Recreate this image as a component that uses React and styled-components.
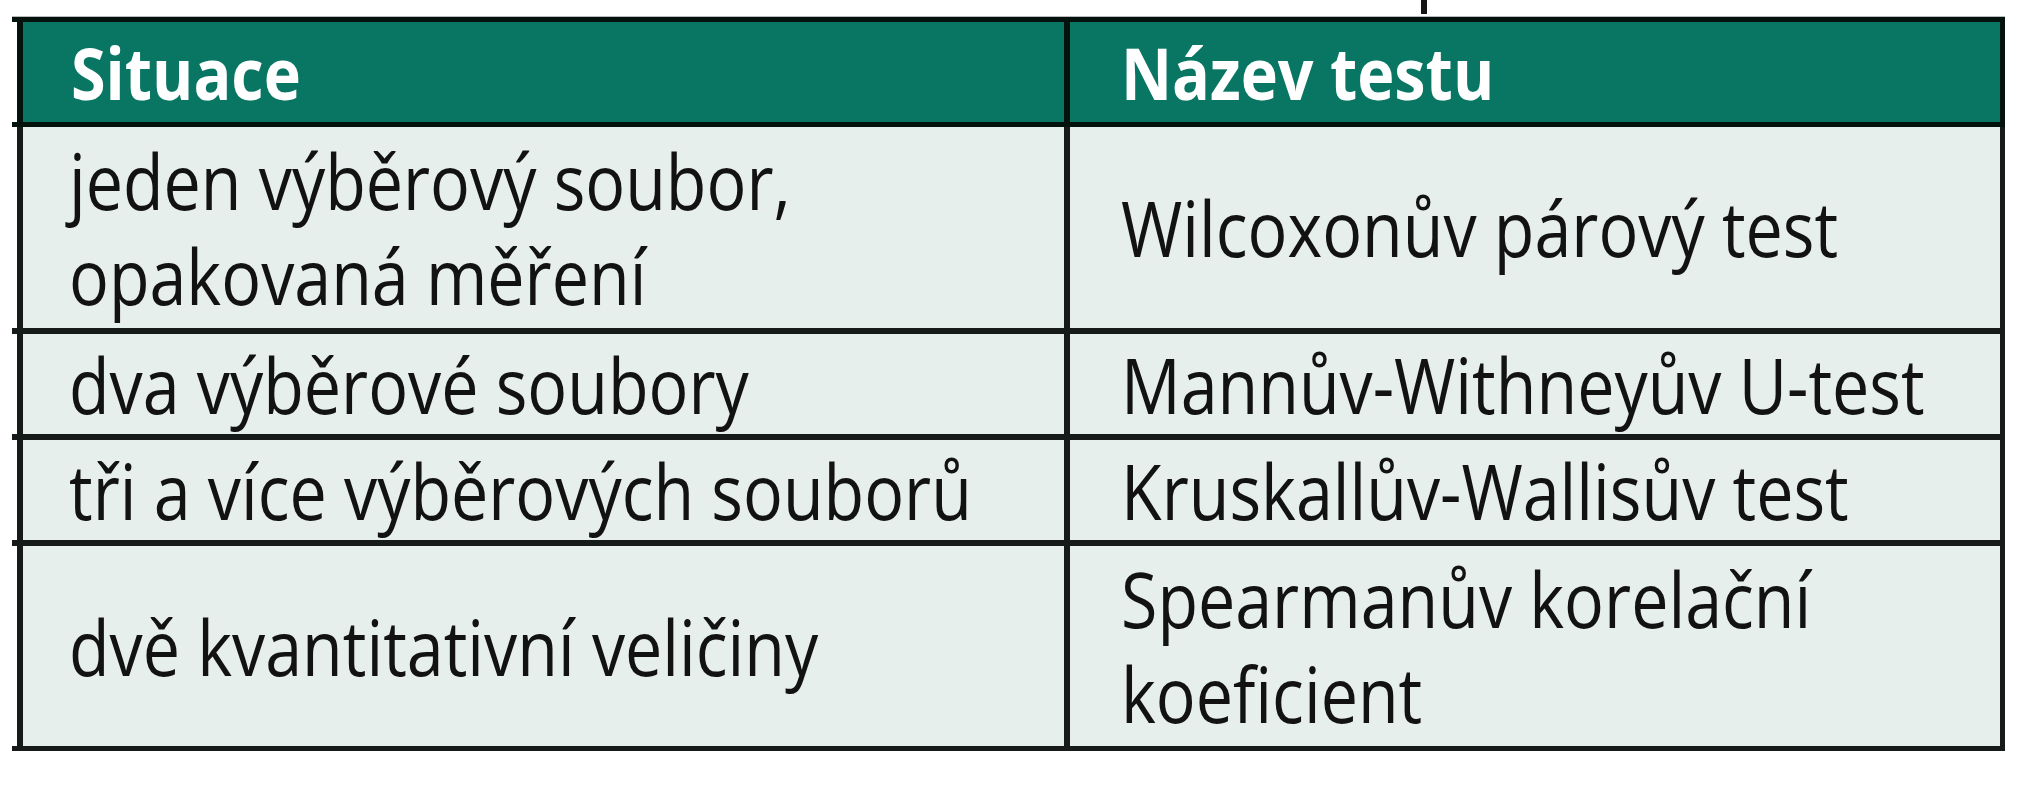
import styled, { createGlobalStyle } from "styled-components";

const Global = createGlobalStyle`
  html, body { margin: 0; background: #fff; }
  body { font-family: "Open Sans", "Noto Sans", sans-serif; }
`;

const Page = styled.div`
  width: 2035px;
  height: 800px;
  overflow: hidden;
`;

const Caption = styled.div`
  height: 17px;
  display: flex;
  padding-left: 1421px;
`;

const CaptionStroke = styled.span`
  width: 6px;
  height: 14px;
  background: #151515;
`;

const Table = styled.div`
  margin-left: 12px;
  width: 1993px;
  display: flex;
  flex-direction: column;
  border-top: 5px solid #03120d;
  box-shadow: 0 -1px 0 #b9bcbb;
`;

const Row = styled.div`
  display: flex;
  height: ${(p) => p.$height}px;
  border-bottom: ${(p) => p.$line}px solid ${(p) => (p.$head ? "#03120d" : "#161a18")};
`;

const Cell = styled.div`
  display: flex;
  align-items: center;
  box-sizing: border-box;
  overflow: hidden;
  background: ${(p) => (p.$head ? "#087662" : "#e6efeb")};
  color: ${(p) => (p.$head ? "#fff" : "#121212")};
  border-left: 6px solid ${(p) => (p.$head ? "#03120d" : "#161a18")};
`;

const SituationCell = styled(Cell)`
  margin-left: 5px;
  width: 1047px;
  padding-left: ${(p) => (p.$head ? 48 : 46)}px;
`;

const TestCell = styled(Cell)`
  width: 941px;
  padding-left: 51px;
  border-right: 5px solid ${(p) => (p.$head ? "#03120d" : "#161a18")};
`;

// the source face is a narrow humanist sans; Open Sans squeezed to the same width
const Text = styled.div`
  flex: none;
  font-size: ${(p) => (p.$head ? 72 : 76)}px;
  font-weight: ${(p) => (p.$head ? 700 : 400)};
  line-height: 95px;
  white-space: nowrap;
  transform: scaleX(0.873);
  transform-origin: left center;
`;

const rows = [
  { situation: ["jeden výběrový soubor,", "opakovaná měření"], test: ["Wilcoxonův párový test"], height: 201, line: 6 },
  { situation: ["dva výběrové soubory"], test: ["Mannův-Withneyův U-test"], height: 100, line: 6 },
  { situation: ["tři a více výběrových souborů"], test: ["Kruskallův-Wallisův test"], height: 100, line: 6 },
  { situation: ["dvě kvantitativní veličiny"], test: ["Spearmanův korelační", "koeficient"], height: 200, line: 5 },
];

const Lines = ({ items }) => (
  <Text>
    {items.map((t) => (
      <div key={t}>{t}</div>
    ))}
  </Text>
);

export default function App() {
  return (
    <Page>
      <Global />
      <Caption>
        <CaptionStroke />
      </Caption>
      <Table>
        <Row $head $height={100} $line={5}>
          <SituationCell $head>
            <Text $head>Situace</Text>
          </SituationCell>
          <TestCell $head>
            <Text $head>Název testu</Text>
          </TestCell>
        </Row>
        {rows.map((r) => (
          <Row key={r.test[0]} $height={r.height} $line={r.line}>
            <SituationCell>
              <Lines items={r.situation} />
            </SituationCell>
            <TestCell>
              <Lines items={r.test} />
            </TestCell>
          </Row>
        ))}
      </Table>
    </Page>
  );
}
